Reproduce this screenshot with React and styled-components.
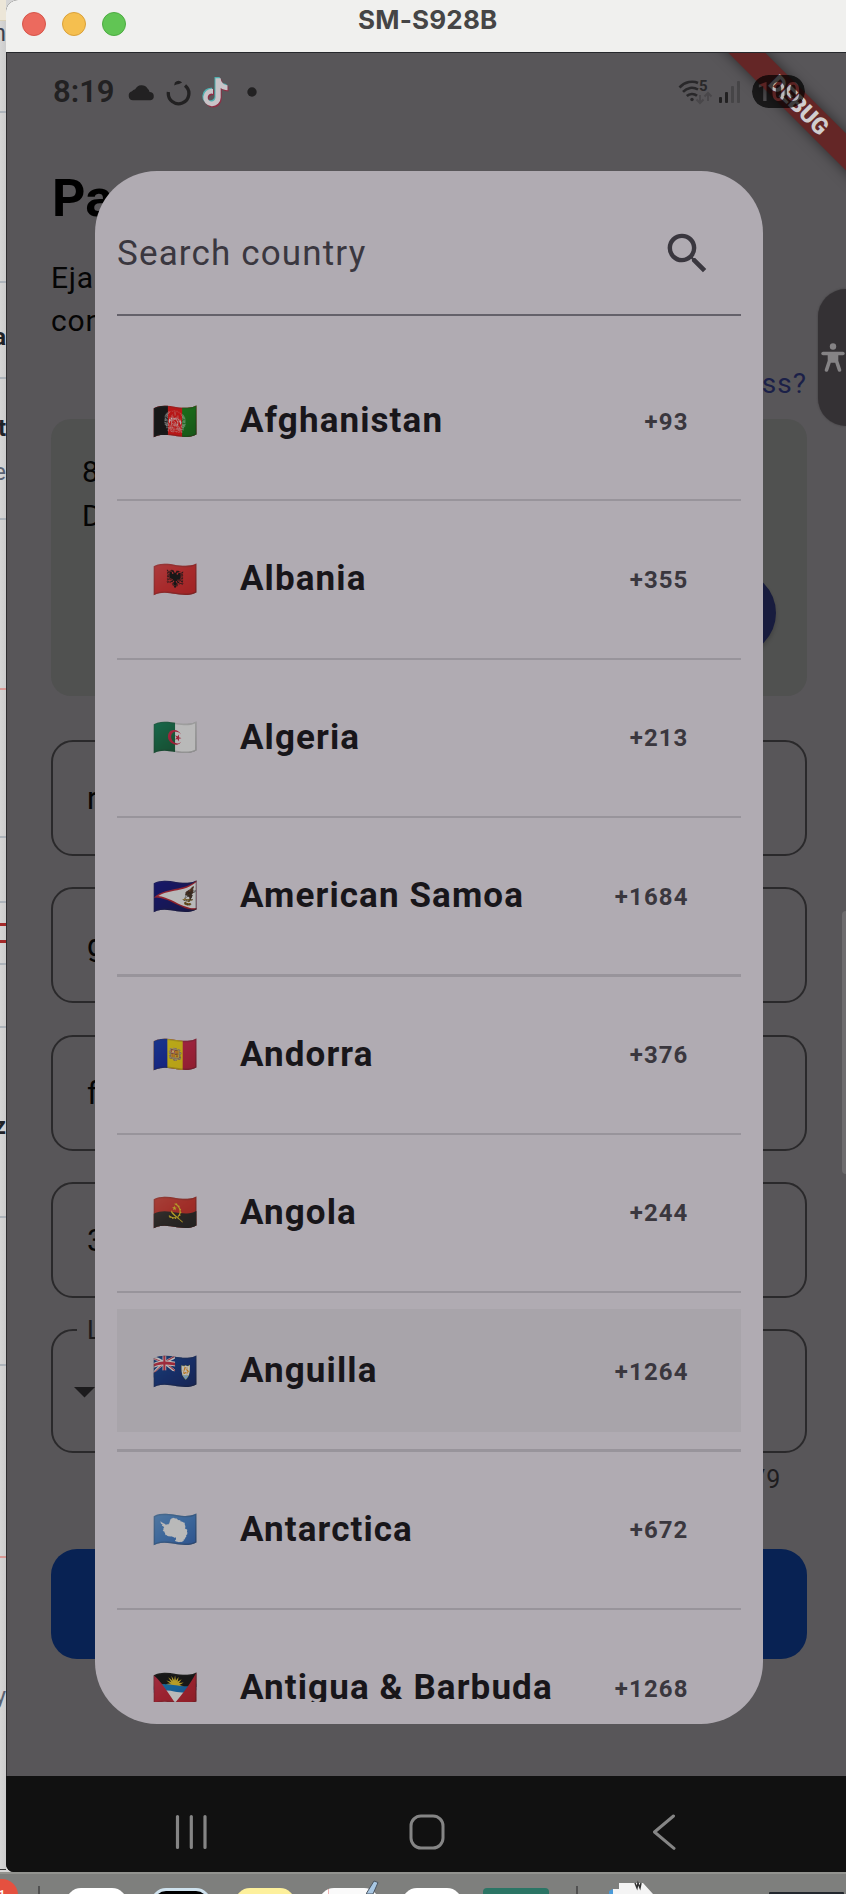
import React from 'react';
import styled, { createGlobalStyle, css } from 'styled-components';

const Global = createGlobalStyle`
  * { box-sizing: border-box; }
  html, body { margin: 0; background: #d6d6d6; }
  body { width: 846px; height: 1894px; overflow: hidden; font-family: Roboto, "Liberation Sans", sans-serif; }
  svg { display: block; flex: none; }
`;

const Desktop = styled.div`
  position: relative;
  width: 846px;
  height: 1894px;
  overflow: hidden;
  display: flex;
  flex-direction: column;
`;

const Workspace = styled.div`
  display: flex;
  height: 1872px;
`;

/* Sliver of the window that sits behind the phone mirror */
const BackWindow = styled.aside`
  width: 6px;
  height: 1870px;
  flex: none;
  overflow: hidden;
  background: linear-gradient(90deg, #d6d6d6, #cccccc);
  border-bottom: 1px solid #333;
`;

const Segment = styled.div`
  display: flex;
  justify-content: flex-end;
  align-items: flex-end;
  height: ${p => p.$h}px;
  padding-bottom: ${p => p.$pad || 0}px;
  background: ${p => p.$bg || 'transparent'};
  border-bottom: ${p => p.$line || 2}px solid ${p => p.$color || '#adb4bb'};
  color: ${p => p.$ink || '#1f2328'};
  font: ${p => (p.$bold ? 700 : 400)} 24px/24px Roboto, sans-serif;
`;

const PhoneWindow = styled.main`
  width: 840px;
  height: 1872px;
  flex: none;
  display: flex;
  flex-direction: column;
  overflow: hidden;
  border-radius: 12px 0 0 8px;
  background: #111;
`;

const TitleBar = styled.header`
  position: relative;
  height: 53px;
  flex: none;
  display: flex;
  align-items: center;
  gap: 16px;
  padding: 0 0 5px 16px;
  background: #f0f0ee;
  border-bottom: 1px solid #26282c;
`;

const Light = styled.span`
  width: 24px;
  height: 24px;
  border-radius: 50%;
  background: ${p => p.$c};
  border: 1px solid ${p => p.$b};
`;

const WindowTitle = styled.h1`
  position: absolute;
  left: 352px;
  top: 4px;
  margin: 0;
  font: 700 26px/32px Inter, sans-serif;
  letter-spacing: 0.2px;
  color: #454545;
`;

const Screen = styled.section`
  position: relative;
  height: 1723px;
  flex: none;
  overflow: hidden;
  background: #585659;
  border-left: 1px solid #2d2c2e;
`;

const StatusBar = styled.div`
  display: flex;
  align-items: center;
  height: 78px;
  padding: 0 42px 0 46px;
  color: #222122;
`;

const Clock = styled.span`
  width: 75px;
  padding-bottom: 1px;
  font-size: 31px;
  font-weight: 600;
  letter-spacing: 0;
`;

const StatusSpacer = styled.span`flex: 1;`;

const StatusIcons = styled.div`
  display: flex;
  align-items: center;
  gap: ${p => p.$gap}px;
  margin-right: ${p => p.$after || 0}px;
`;

const Page = styled.div`
  padding: 38px 39px 0 44px;
  color: #050505;
`;

const Heading = styled.h2`
  margin: 0 0 26.5px 1px;
  font-size: 52px;
  line-height: 60px;
  font-weight: 700;
  color: #000;
`;

const Lead = styled.p`
  margin: 0 0 24px 0;
  font-size: 30px;
  line-height: 43px;
  letter-spacing: 0.8px;
`;

const HelpLink = styled.a`
  display: block;
  margin-bottom: 17px;
  text-align: right;
  font-size: 28px;
  line-height: 36px;
  letter-spacing: 1px;
  color: #1b2048;
`;

const AddressCard = styled.div`
  display: flex;
  justify-content: space-between;
  height: 277px;
  padding: 31px 31px 0 31px;
  border-radius: 20px;
  background: #505150;
  font-size: 30px;
  line-height: 44px;
`;

const RoundAction = styled.span`
  width: 84px;
  height: 84px;
  margin-top: 121px;
  border-radius: 50%;
  background: #181c3e;
  box-shadow: 0 3px 4px rgba(0, 0, 0, 0.2);
`;

const Fields = styled.div`
  display: flex;
  flex-direction: column;
  gap: 31.2px;
  margin-top: 44.7px;
`;

const Field = styled.fieldset`
  min-width: 0;
  margin: 0;
  height: 116px;
  padding: 0 0 0 34px;
  border: 2px solid #2a292b;
  border-radius: 22px;
  font-size: 31px;
  line-height: 113px;
`;

const SelectField = styled(Field)`
  height: 136px;
  margin-top: -11.5px;
  padding-left: 21px;

  legend {
    margin-left: 3px;
    padding: 0 10px 0 10px;
    height: 25px;
    line-height: 26px;
    font-size: 26px;
    color: #1c1b1d;
  }
  svg { margin-top: 45px; }
`;

const Counter = styled.div`
  margin: 10px 26px 0 0;
  height: 33px;
  text-align: right;
  font-size: 25px;
  line-height: 33px;
  letter-spacing: 0.8px;
  color: #1e1d1f;
`;

const Submit = styled.div`
  height: 110px;
  margin-top: 52.5px;
  border-radius: 26px;
  background: #082253;
`;

const RibbonClip = styled.div`
  position: absolute;
  inset: 0 0 auto auto;
  width: 220px;
  height: 220px;
  overflow: hidden;
`;

const Ribbon = styled.div`
  position: absolute;
  left: 22.5px;
  top: 38.5px;
  width: 300px;
  height: 26px;
  transform: rotate(45deg);
  background: #642626;
  box-shadow: 0 0 13px rgba(0, 0, 0, 0.5);
  text-align: center;
  font-size: 23px;
  line-height: 27px;
  font-weight: 900;
  color: #d0cdcf;
`;

const Battery = styled.div`
  position: absolute;
  right: 41px;
  top: 22px;
`;

const EdgeHandle = styled.div`
  position: absolute;
  right: 0;
  top: 236px;
  width: 28px;
  height: 137px;
  display: flex;
  align-items: center;
  padding: 0 0 0 2px;
  border-radius: 30px 0 0 30px;
  background: #343134;
  box-shadow: 0 0 2px #3b393b;
`;

const EdgeBar = styled.div`
  position: absolute;
  right: 0;
  top: 858px;
  width: 4px;
  height: 263px;
  border-radius: 4px 0 0 4px;
  background: #6e6c6e;
`;

const Dialog = styled.div`
  position: absolute;
  left: 88px;
  top: 117.5px;
  width: 668px;
  height: 1553px;
  display: flex;
  flex-direction: column;
  padding: 22px;
  border-radius: 62px;
  background: #b0abb2;
`;

const SearchBox = styled.label`
  display: flex;
  align-items: center;
  justify-content: space-between;
  height: 123px;
  flex: none;
  margin-bottom: 43.5px;
  padding-right: 27px;
  border-bottom: 2px solid #64616a;
  font-size: 35px;
  letter-spacing: 1.15px;
  color: #3a373f;
`;

const CountryList = styled.ul`
  flex: 1;
  min-height: 0;
  margin: 0;
  padding: 0;
  overflow: hidden;
  list-style: none;
`;

const Country = styled.li`
  display: flex;
  align-items: center;
  height: 123.2px;
  padding: 0 52.5px 0 35px;
  ${p => p.$active && css`background: #a8a4aa;`}
`;

const Divider = styled.li`
  height: 35.2px;
  padding: 17px 0 16px;
  background: linear-gradient(#98949b, #98949b) content-box;
`;

const Flag = styled.span`
  width: 88px;
  padding-top: 2px;
  font-family: "Noto Color Emoji", sans-serif;
  font-size: 37px;
  line-height: 44px;
  filter: brightness(0.86) contrast(0.8) brightness(0.92);
`;

const Name = styled.span`
  flex: 1;
  white-space: nowrap;
  font-size: 35px;
  font-weight: 700;
  letter-spacing: 1.1px;
  color: #18161a;
`;

const Code = styled.span`
  padding-top: 2px;
  font-size: 24px;
  font-weight: 700;
  letter-spacing: 1.1px;
  color: #3a373e;
`;

const NavBar = styled.nav`
  flex: 1;
  display: flex;
  align-items: center;
  justify-content: space-between;
  padding: 15px 170px 0 169px;
  background: #111;
`;

const HomeIcon = styled.svg`
  margin-right: 8px;
`;

const Dock = styled.footer`
  display: flex;
  align-items: flex-start;
  height: 22px;
  overflow: hidden;
  border-top: 2px solid #92938f;
  background: #7e7f7d;
`;

const Badge = styled.span`
  width: 32px;
  height: 32px;
  margin: 5px 20px 0 -14px;
  flex: none;
  border-radius: 50%;
  background: #e5503f;
  padding: 8px 0 0 11px;
  color: #fff;
  font-size: 17px;
  line-height: 18px;
`;

const DockRule = styled.span`
  width: 2px;
  height: 14px;
  margin: 12px ${p => p.$after}px 0 0;
  flex: none;
  background: #515151;
`;

const DockApp = styled.span`
  width: ${p => p.$w || 61}px;
  height: 30px;
  margin: ${p => p.$top || 14}px ${p => p.$after || 0}px 0 0;
  flex: none;
  border-radius: ${p => p.$r || 15}px ${p => p.$r || 15}px 0 0;
  background: ${p => p.$c};
  ${p => p.$edge && css`border: 3px solid ${p.$edge};`}
`;

const Pen = styled.svg`
  margin: 0 22px 0 -13px;
`;

const FolderIcon = styled.svg`
  margin-right: 114px;
`;

const countries = [
  ['🇦🇫', 'Afghanistan', '+93'],
  ['🇦🇱', 'Albania', '+355'],
  ['🇩🇿', 'Algeria', '+213'],
  ['🇦🇸', 'American Samoa', '+1684'],
  ['🇦🇩', 'Andorra', '+376'],
  ['🇦🇴', 'Angola', '+244'],
  ['🇦🇮', 'Anguilla', '+1264'],
  ['🇦🇶', 'Antarctica', '+672'],
  ['🇦🇬', 'Antigua & Barbuda', '+1268'],
];

const Cloud = () => (
  <svg width="27" height="17" viewBox="0 0 27 17" fill="#222122">
    <path d="M5 16.3a4.6 4.6 0 0 1-1-9A4.5 4.5 0 0 1 7.200 5.300 7 7 0 0 1 19.500 4.500 6.500 6.500 0 0 1 21.600 8 4.200 4.200 0 0 1 22.500 16.300z" />
  </svg>
);

const Ring = () => (
  <svg width="25" height="27" viewBox="0 0 24 26" fill="none" stroke="#222122" strokeWidth="3.200">
    <path d="M2.300 12.500A9.900 9.900 0 1 0 18.300 6.200" />
    <path d="M8.500 3.300Q12 0 15.500 3.300L12.500 4.700Q10 5 7.800 6.300z" fill="#222122" stroke="none" />
  </svg>
);

const note = 'M13.500 1h5.200c.3 4 2.700 6.600 6.800 7v5c-2.600 0-4.900-.8-6.800-2.200v9.600a8.700 8.700 0 1 1-7.700-8.700v5a3.900 3.900 0 1 0 2.500 3.700z';

const TikTok = () => (
  <svg width="28" height="33" viewBox="0 0 28 33">
    <path d={note} fill="#4fb0b0" />
    <path d={note} fill="#8d2f45" transform="translate(2 2.500)" />
    <path d={note} fill="#c8c4c8" transform="translate(1 1.200)" />
  </svg>
);

const Wifi = () => (
  <svg width="36" height="26" viewBox="0 0 36 26" fill="none" stroke="#29282a" strokeWidth="2.600">
    <path d="M1.500 8.500C7 2.500 15 1.500 20 4M5 12.800C9 8.500 15 7.500 20 10.500M8.800 17C11.500 14.500 16 14.200 19 16.800" />
    <circle cx="14" cy="20.500" r="1.700" fill="#29282a" stroke="none" />
    <path d="M22 16v8M18.500 20.500L22 24l3.500-3.500M30 22v-8M26.500 17.500L30 14l3.500 3.500" stroke="#49474a" strokeWidth="2" />
    <text x="21" y="12" fontFamily="Roboto" fontSize="15" fontWeight="700" fill="#29282a" stroke="none">5</text>
  </svg>
);

const Signal = () => (
  <svg width="22" height="24" viewBox="0 0 22 24">
    <rect x="0" y="17" width="3" height="6" rx="1" fill="#222122" />
    <rect x="6" y="12" width="3" height="11" rx="1" fill="#222122" />
    <rect x="12" y="6" width="3" height="17" rx="1" fill="#464547" />
    <rect x="18" y="1" width="3" height="22" rx="1" fill="#464547" />
  </svg>
);

export default function App() {
  return (
    <Desktop>
      <Global />
      <Workspace>
        <BackWindow>
          <Segment $h={21} $bg="#ece6d8" $line={1} $color="#d8d0b8" />
          <Segment $h={92} $pad={66} $ink="#3a4150">n</Segment>
          <Segment $h={170} />
          <Segment $h={96} $pad={28} $bold>a</Segment>
          <Segment $h={62} $color="transparent" $line={1} $bold>t</Segment>
          <Segment $h={79} $pad={34} $ink="#596273">e</Segment>
          <Segment $h={170} $color="#d99a96" />
          <Segment $h={148} />
          <Segment $h={65} />
          <Segment $h={23} $line={3} $color="#a32a2a" />
          <Segment $h={17} $line={3} $color="#a32a2a" />
          <Segment $h={22} />
          <Segment $h={63} />
          <Segment $h={190} $pad={78} $bold>z</Segment>
          <Segment $h={148} />
          <Segment $h={192} $color="#d99a96" />
          <Segment $h={152} $color="transparent" $ink="#596273">y</Segment>
        </BackWindow>

        <PhoneWindow>
          <TitleBar>
            <Light $c="#ec6a5e" $b="#d55549" />
            <Light $c="#f5bf4f" $b="#d9a03a" />
            <Light $c="#61c554" $b="#4dab42" />
            <WindowTitle>SM-S928B</WindowTitle>
          </TitleBar>

          <Screen>
            <StatusBar>
              <Clock>8:19</Clock>
              <StatusIcons $gap={10.5}>
                <Cloud />
                <Ring />
                <TikTok />
                <svg width="30" height="10" viewBox="0 0 30 10">
                  <circle cx="12" cy="5" r="4.700" fill="#222122" />
                </svg>
              </StatusIcons>
              <StatusSpacer />
              <StatusIcons $gap={5} $after={63}>
                <Wifi />
                <Signal />
              </StatusIcons>
            </StatusBar>

            <Page>
              <Heading>Pa</Heading>
              <Lead>Eja<br />con</Lead>
              <HelpLink>ess?</HelpLink>
              <AddressCard>
                <span>8<br />D</span>
                <RoundAction />
              </AddressCard>
              <Fields>
                <Field>r</Field>
                <Field>g</Field>
                <Field>f</Field>
                <Field>3</Field>
                <SelectField>
                  <legend>L</legend>
                  <svg width="22" height="11" viewBox="0 0 22 11"><path d="M0 0h21L10.500 10.500z" fill="#1c1b1d" /></svg>
                </SelectField>
              </Fields>
              <Counter>/9</Counter>
              <Submit />
            </Page>

            <RibbonClip><Ribbon>DEBUG</Ribbon></RibbonClip>
            <Battery>
              <svg width="53" height="33" viewBox="0 0 53 33">
                <mask id="level">
                  <rect width="53" height="33" rx="16.500" fill="#fff" />
                  <text x="26.500" y="25.500" textAnchor="middle" fontFamily="Roboto" fontWeight="600" fontSize="25.500" fill="#222">100</text>
                </mask>
                <rect width="53" height="33" rx="16.500" fill="#000" opacity="0.7" mask="url(#level)" />
              </svg>
            </Battery>

            <EdgeHandle>
              <svg width="26" height="30" viewBox="0 0 26 30" fill="none" stroke="#858385">
                <circle cx="13" cy="3.500" r="3.200" fill="#858385" stroke="none" />
                <path d="M3 10.500h20" strokeWidth="3.400" strokeLinecap="round" />
                <path d="M9.500 11h7v7l3 9M16 18h-6M9.500 11v7l-3 9" strokeWidth="3.600" strokeLinecap="round" />
                <path d="M9 10h8v9H9z" fill="#858385" stroke="none" />
              </svg>
            </EdgeHandle>
            <EdgeBar />

            <Dialog>
              <SearchBox>
                Search country
                <svg width="53" height="53" viewBox="0 0 24 24" fill="#3a373f">
                  <path d="M15.500 14h-.79l-.28-.27A6.471 6.471 0 0 0 16 9.500 6.500 6.500 0 1 0 9.500 16c1.610 0 3.090-.59 4.230-1.570l.27.28v.79l5 4.990L20.490 19l-4.990-5zm-6 0C7.010 14 5 11.990 5 9.500S7.010 5 9.500 5 14 7.010 14 9.500 11.990 14 9.500 14z" />
                </svg>
              </SearchBox>
              <CountryList>
                {countries.map(([flag, name, code], i) => (
                  <React.Fragment key={name}>
                    {i > 0 && <Divider />}
                    <Country $active={name === 'Anguilla'}>
                      <Flag>{flag}</Flag>
                      <Name>{name}</Name>
                      <Code>{code}</Code>
                    </Country>
                  </React.Fragment>
                ))}
              </CountryList>
            </Dialog>
          </Screen>

          <NavBar>
            <svg width="34" height="36" viewBox="0 0 34 36" stroke="#858585" strokeWidth="3.200" strokeLinecap="round">
              <path d="M2.500 2.500v31M16.300 2.500v31M30 2.500v31" />
            </svg>
            <HomeIcon width="36" height="36" viewBox="0 0 36 36" fill="none" stroke="#858585" strokeWidth="3">
              <rect x="2" y="2" width="32" height="32" rx="10" />
            </HomeIcon>
            <svg width="24" height="36" viewBox="0 0 24 36" fill="none" stroke="#858585" strokeWidth="3" strokeLinecap="round" strokeLinejoin="round">
              <path d="M21.500 2L2.500 18l19.500 16.300" />
            </svg>
          </NavBar>
        </PhoneWindow>
      </Workspace>

      <Dock>
        <Badge>1</Badge>
        <DockRule $after={26} />
        <DockApp $c="#fff" $after={24} />
        <DockApp $c="#000" $edge="#cfe2ee" $w={60} $after={24} />
        <DockApp $c="#fdf09c" $w={60} $after={24} />
        <DockApp $c="linear-gradient(90deg,#fff 9px,#f0b5b5 9px 10px,#fafafa 10px)" $w={60} />
        <Pen width="14" height="20" viewBox="0 0 14 20">
          <path d="M0 20L8 7l4 1.500L7 20z" fill="#a9c8e4" stroke="#4b5560" strokeWidth="1" />
        </Pen>
        <DockApp $c="#fff" $w={60} $after={21} />
        <DockApp $c="#2b7565" $r={4} $w={66} $after={27} />
        <DockRule $after={31} />
        <FolderIcon width="46" height="20" viewBox="0 0 46 20">
          <path d="M0 20v-3l4-2v5z" fill="#4a9ad8" />
          <path d="M4 20v-5h6V9h24l10 11z" fill="#f4f4f4" />
          <path d="M26 9l2 5 1-5 2 5 1-5" stroke="#333" strokeWidth="1.500" fill="none" />
        </FolderIcon>
        <DockApp $c="#23282e" $r={1} $w={75} $top={18} />
      </Dock>
    </Desktop>
  );
}
